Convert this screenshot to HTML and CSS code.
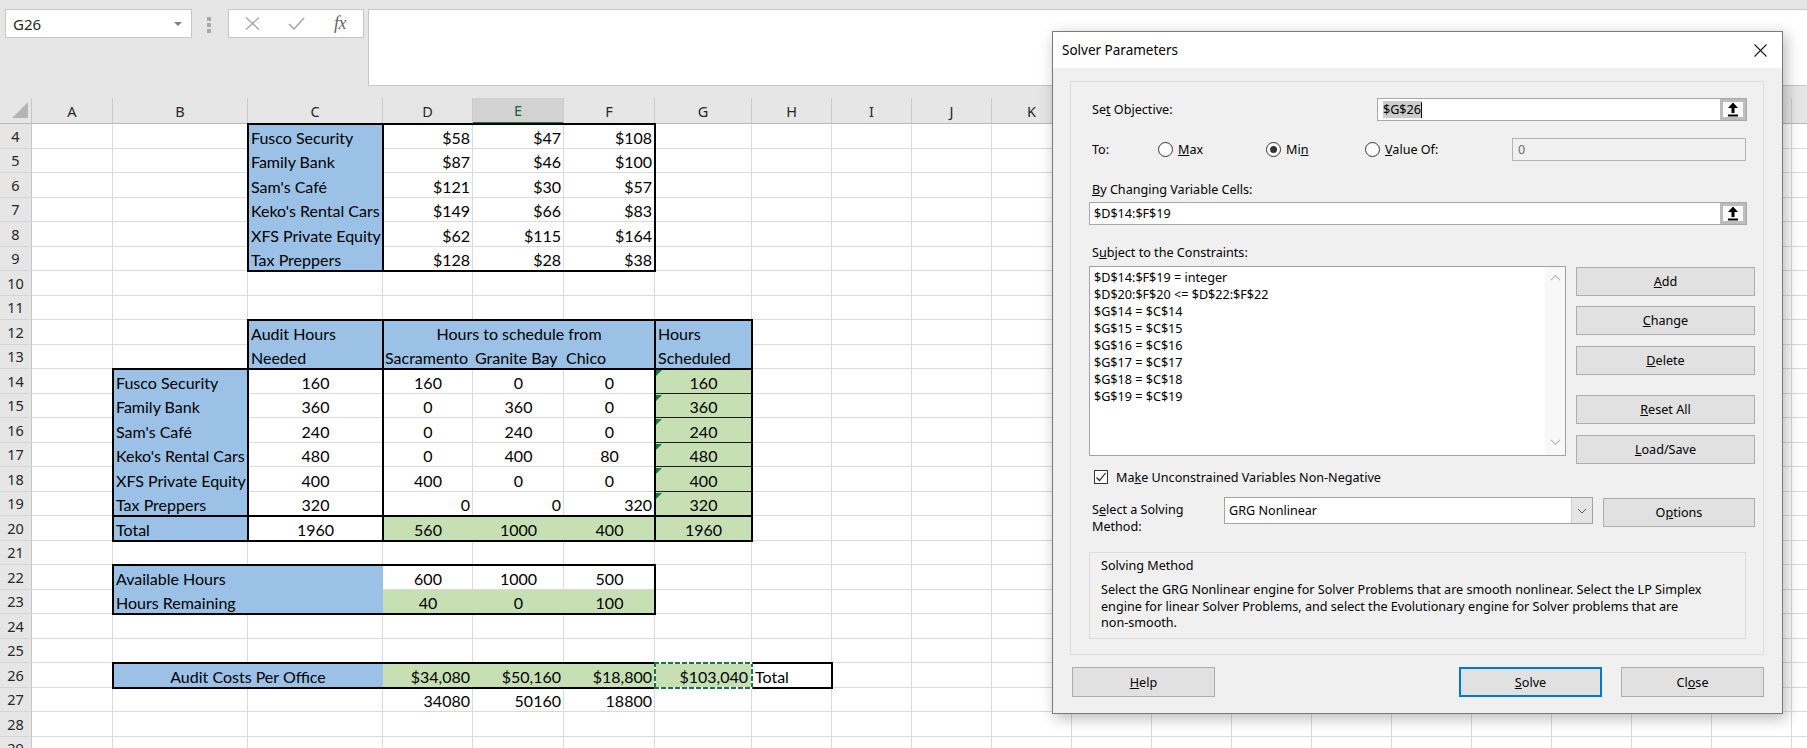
FILE: index.html
```html
<!DOCTYPE html>
<html lang="en">
<head>
<meta charset="utf-8">
<title>Solver Parameters</title>
<link rel="stylesheet" href="styles.css">
</head>
<body>
<div class="app">
  <div class="fbar">
    <div class="namebox"><span>G26</span><span class="nb-arrow"></span></div>
    <div class="dots"><i></i><i></i><i></i></div>
    <div class="fxbox">
      <span class="fxi"><svg width="15" height="13" viewBox="0 0 15 13"><path d="M1 0.5L14 12.5M14 0.5L1 12.5" stroke="#a8a8a8" stroke-width="1.4" fill="none"/></svg></span>
      <span class="fxi"><svg width="17" height="13" viewBox="0 0 17 13"><path d="M1 7L6 12L16 1" stroke="#a8a8a8" stroke-width="1.6" fill="none"/></svg></span>
      <span class="fxi fx">fx</span>
    </div>
    <div class="formula"></div>
  </div>

  <div class="sheet">
    <div class="corner"><span class="corner-tri"></span></div>
    <div class="ch">A</div><div class="ch">B</div><div class="ch">C</div><div class="ch">D</div><div class="ch sel">E</div><div class="ch">F</div><div class="ch">G</div><div class="ch">H</div><div class="ch">I</div><div class="ch">J</div><div class="ch">K</div><div class="ch">L</div><div class="ch">M</div><div class="ch">N</div><div class="ch">O</div><div class="ch">P</div><div class="ch">Q</div><div class="ch">R</div><div class="ch">S</div><div class="ch">T</div><div class="ch">U</div>

    <div class="cells"></div>

    <div class="rh r4">4</div><div class="rh r5">5</div><div class="rh r6">6</div><div class="rh r7">7</div><div class="rh r8">8</div><div class="rh r9">9</div><div class="rh r10">10</div><div class="rh r11">11</div><div class="rh r12">12</div><div class="rh r13">13</div><div class="rh r14">14</div><div class="rh r15">15</div><div class="rh r16">16</div><div class="rh r17">17</div><div class="rh r18">18</div><div class="rh r19">19</div><div class="rh r20">20</div><div class="rh r21">21</div><div class="rh r22">22</div><div class="rh r23">23</div><div class="rh r24">24</div><div class="rh r25">25</div><div class="rh r26">26</div><div class="rh r27">27</div><div class="rh r28">28</div><div class="rh r29">29</div>

    <!-- rate table -->
    <div class="cell l blue r4 cC">Fusco Security</div><div class="cell r r4 cD">$58</div><div class="cell r r4 cE">$47</div><div class="cell r r4 cF">$108</div>
    <div class="cell l blue r5 cC">Family Bank</div><div class="cell r r5 cD">$87</div><div class="cell r r5 cE">$46</div><div class="cell r r5 cF">$100</div>
    <div class="cell l blue r6 cC">Sam's Café</div><div class="cell r r6 cD">$121</div><div class="cell r r6 cE">$30</div><div class="cell r r6 cF">$57</div>
    <div class="cell l blue r7 cC">Keko's Rental Cars</div><div class="cell r r7 cD">$149</div><div class="cell r r7 cE">$66</div><div class="cell r r7 cF">$83</div>
    <div class="cell l blue r8 cC">XFS Private Equity</div><div class="cell r r8 cD">$62</div><div class="cell r r8 cE">$115</div><div class="cell r r8 cF">$164</div>
    <div class="cell l blue r9 cC">Tax Preppers</div><div class="cell r r9 cD">$128</div><div class="cell r r9 cE">$28</div><div class="cell r r9 cF">$38</div>

    <!-- schedule table header -->
    <div class="cell l blue r12 cC">Audit Hours</div><div class="cell m blue r12 cDF">Hours to schedule from</div><div class="cell l blue r12 cG">Hours</div>
    <div class="cell l blue r13 cC">Needed</div><div class="cell l blue r13 cD tight">Sacramento</div><div class="cell l blue r13 cE tight">Granite Bay</div><div class="cell l blue r13 cF tight">Chico</div><div class="cell l blue r13 cG">Scheduled</div>

    <!-- schedule table body -->
    <div class="cell l blue r14 cB">Fusco Security</div><div class="cell m r14 cC">160</div><div class="cell m r14 cD">160</div><div class="cell m r14 cE">0</div><div class="cell m r14 cF">0</div><div class="cell m green tri sep r14 cG">160</div>
    <div class="cell l blue r15 cB">Family Bank</div><div class="cell m r15 cC">360</div><div class="cell m r15 cD">0</div><div class="cell m r15 cE">360</div><div class="cell m r15 cF">0</div><div class="cell m green tri sep r15 cG">360</div>
    <div class="cell l blue r16 cB">Sam's Café</div><div class="cell m r16 cC">240</div><div class="cell m r16 cD">0</div><div class="cell m r16 cE">240</div><div class="cell m r16 cF">0</div><div class="cell m green tri sep r16 cG">240</div>
    <div class="cell l blue r17 cB">Keko's Rental Cars</div><div class="cell m r17 cC">480</div><div class="cell m r17 cD">0</div><div class="cell m r17 cE">400</div><div class="cell m r17 cF">80</div><div class="cell m green tri sep r17 cG">480</div>
    <div class="cell l blue r18 cB">XFS Private Equity</div><div class="cell m r18 cC">400</div><div class="cell m r18 cD">400</div><div class="cell m r18 cE">0</div><div class="cell m r18 cF">0</div><div class="cell m green tri sep r18 cG">400</div>
    <div class="cell l blue r19 cB">Tax Preppers</div><div class="cell m r19 cC">320</div><div class="cell r r19 cD">0</div><div class="cell r r19 cE">0</div><div class="cell r r19 cF">320</div><div class="cell m green tri r19 cG">320</div>
    <div class="cell l blue r20 cB">Total</div><div class="cell m r20 cC">1960</div><div class="cell m green r20 cD">560</div><div class="cell m green r20 cE">1000</div><div class="cell m green r20 cF">400</div><div class="cell m green r20 cG">1960</div>

    <!-- availability -->
    <div class="cell l blue r22 cBC">Available Hours</div><div class="cell m r22 cD">600</div><div class="cell m r22 cE">1000</div><div class="cell m r22 cF">500</div>
    <div class="cell l blue r23 cBC">Hours Remaining</div><div class="cell m green r23 cD">40</div><div class="cell m green r23 cE">0</div><div class="cell m green r23 cF">100</div>

    <!-- costs -->
    <div class="cell m blue r26 cBC">Audit Costs Per Office</div><div class="cell r green r26 cD">$34,080</div><div class="cell r green r26 cE">$50,160</div><div class="cell r green r26 cF">$18,800</div><div class="cell r ants r26 cG">$103,040</div><div class="cell l white r26 cH">Total</div>
    <div class="cell r r27 cD">34080</div><div class="cell r r27 cE">50160</div><div class="cell r r27 cF">18800</div>

    <!-- thick borders -->
    <div class="box r4-9 cC"></div>
    <div class="box r4-9 cDF"></div>
    <div class="box r12-13 cC"></div>
    <div class="box r12-13 cDF"></div>
    <div class="box r12-13 cG"></div>
    <div class="box r14-19 cB"></div>
    <div class="box r14-19 cC"></div>
    <div class="box r14-19 cDF"></div>
    <div class="box r14-19 cG"></div>
    <div class="box r20 cB"></div>
    <div class="box r20 cC"></div>
    <div class="box r20 cDF"></div>
    <div class="box r20 cG"></div>
    <div class="box r22-23 cBF"></div>
    <div class="box r26 cBH"></div>
  </div>
</div>

<div class="dialog">
  <div class="dlg-title">
    <span>Solver Parameters</span>
    <svg width="13" height="13" viewBox="0 0 13 13"><path d="M0.5 0.5L12.5 12.5M12.5 0.5L0.5 12.5" stroke="#1a1a1a" stroke-width="1.1" fill="none"/></svg>
  </div>
  <div class="panel">
    <div class="row-obj">
      <span class="lab">Se<u>t</u> Objective:</span>
      <div class="refbox obj"><span class="seltext">$G$26</span><span class="caret"></span>
        <span class="refbtn"><svg width="12" height="15" viewBox="0 0 12 15"><path d="M6 0.5L11 6H7.5V11H4.5V6H1Z" fill="#000"/><rect x="1" y="12.5" width="10" height="2" fill="#000"/></svg></span>
      </div>
    </div>
    <div class="row-to">
      <span class="lab">To:</span>
      <span class="radio"><i class="rb"></i><span><u>M</u>ax</span></span>
      <span class="radio"><i class="rb on"></i><span>Mi<u>n</u></span></span>
      <span class="radio"><i class="rb"></i><span><u>V</u>alue Of:</span></span>
      <span class="valbox">0</span>
    </div>
    <div class="lbl lbl-chg"><u>B</u>y Changing Variable Cells:</div>
    <div class="refbox chg"><span>$D$14:$F$19</span>
      <span class="refbtn"><svg width="12" height="15" viewBox="0 0 12 15"><path d="M6 0.5L11 6H7.5V11H4.5V6H1Z" fill="#000"/><rect x="1" y="12.5" width="10" height="2" fill="#000"/></svg></span>
    </div>
    <div class="lbl lbl-sub">S<u>u</u>bject to the Constraints:</div>
    <div class="cons">
      <div class="listbox">
        <div class="items">
          <div>$D$14:$F$19 = integer</div>
          <div>$D$20:$F$20 &lt;= $D$22:$F$22</div>
          <div>$G$14 = $C$14</div>
          <div>$G$15 = $C$15</div>
          <div>$G$16 = $C$16</div>
          <div>$G$17 = $C$17</div>
          <div>$G$18 = $C$18</div>
          <div>$G$19 = $C$19</div>
        </div>
        <div class="vscroll">
          <svg width="11" height="7" viewBox="0 0 11 7"><path d="M1 6L5.5 1.5L10 6" stroke="#bdbdbd" stroke-width="1.1" fill="none"/></svg>
          <svg width="11" height="7" viewBox="0 0 11 7"><path d="M1 1L5.5 5.5L10 1" stroke="#bdbdbd" stroke-width="1.1" fill="none"/></svg>
        </div>
      </div>
      <div class="cons-btns">
        <button class="btn b-add"><u>A</u>dd</button>
        <button class="btn b-change"><u>C</u>hange</button>
        <button class="btn b-delete"><u>D</u>elete</button>
        <button class="btn b-reset"><u>R</u>eset All</button>
        <button class="btn b-load"><u>L</u>oad/Save</button>
      </div>
    </div>
    <div class="chk-row">
      <span class="chk"><svg width="12" height="12" viewBox="0 0 12 12"><path d="M1.5 6.5L4.5 9.5L10.5 2" stroke="#222" stroke-width="1.2" fill="none"/></svg></span>
      <span>Ma<u>k</u>e Unconstrained Variables Non-Negative</span>
    </div>
    <div class="method-row">
      <div class="method-lbl">S<u>e</u>lect a Solving<br>Method:</div>
      <div class="combo"><span>GRG Nonlinear</span><span class="combo-btn"><svg width="10" height="6" viewBox="0 0 10 6"><path d="M1 1L5 5L9 1" stroke="#606060" stroke-width="1" fill="none"/></svg></span></div>
      <button class="btn b-opt">O<u>p</u>tions</button>
    </div>
    <div class="method-box">
      <div class="mb-title">Solving Method</div>
      <div class="mb-text">Select the GRG Nonlinear engine for Solver Problems that are smooth nonlinear. Select the LP Simplex<br>engine for linear Solver Problems, and select the Evolutionary engine for Solver problems that are<br>non-smooth.</div>
    </div>
  </div>
  <div class="dlg-foot">
    <button class="btn fbtn"><u>H</u>elp</button>
    <button class="btn fbtn solve"><u>S</u>olve</button>
    <button class="btn fbtn close">Cl<u>o</u>se</button>
  </div>
</div>
</body>
</html>
```

FILE: styles.css
```css
* { box-sizing: border-box; margin: 0; padding: 0; }
html, body { width: 1807px; height: 748px; overflow: hidden; }
body { background: #e6e6e6; font-family: "Noto Sans", sans-serif; position: relative; color: #000; }

.app { display: flex; flex-direction: column; height: 748px; }

/* formula bar */
.fbar { height: 98px; flex: none; display: flex; align-items: flex-start; padding: 9px 0 0 5px; }
.namebox { width: 187px; height: 29px; background: #fff; border: 1px solid #c6c6c6; display: flex; align-items: center; justify-content: space-between; padding: 0 9px 0 7px; font-size: 15px; color: #262626; }
.nb-arrow { width: 0; height: 0; border-left: 4px solid transparent; border-right: 4px solid transparent; border-top: 4px solid #7f7f7f; }
.dots { margin: 8px 0 0 15px; width: 4px; display: flex; flex-direction: column; gap: 2px; }
.dots i { display: block; width: 4px; height: 4px; background: #a9a9a9; }
.fxbox { margin-left: 17px; width: 136px; height: 29px; background: #fff; border: 1px solid #c6c6c6; display: grid; grid-template-columns: repeat(3, 44px); padding-left: 1px; align-items: center; }
.fxi { display: flex; justify-content: center; align-items: center; }
.fx { font-family: "Liberation Serif", serif; font-style: italic; font-size: 18px; color: #666; letter-spacing: -0.5px; }
.formula { margin-left: 4px; flex: 1; height: 77px; background: #fff; border: 1px solid #c6c6c6; border-right: 0; }

/* sheet grid */
.sheet {
  flex: 1; min-height: 0; overflow: hidden; background: #fff;
  display: grid;
  grid-template-columns: [rh] 32px [A] 81px [B] 135px [C] 135px [D] 90px [E] 91px [F] 91px [G] 97px [H] 80px [I] repeat(12, 80px) [U] 80px;
  grid-template-rows: 26px repeat(13, 25px 24px);
  --gl: #dadada;
}
.corner { background: #e6e6e6; border-right: 1px solid #c6c6c6; border-bottom: 1px solid #b9b9b9; display: flex; align-items: flex-end; justify-content: flex-end; padding: 0 3px 5px 0; }
.corner-tri { width: 0; height: 0; border-left: 16px solid transparent; border-bottom: 16px solid #b5b5b5; }
.ch { background: #e6e6e6; border-right: 1px solid #cbcbcb; border-bottom: 1px solid #b9b9b9; display: flex; align-items: center; justify-content: center; font-size: 14.5px; line-height: 1; color: #262626; padding-top: 1px; }
.ch.sel { background: #d2d2d2; border-bottom: 2px solid #217346; color: #1b5e37; }

.cells {
  grid-row: 2 / -1; grid-column: A / -1;
  background-image:
    linear-gradient(to right, transparent 80px, var(--gl) 80px 81px, transparent 81px 215px, var(--gl) 215px 216px, transparent 216px 350px, var(--gl) 350px 351px, transparent 351px 440px, var(--gl) 440px 441px, transparent 441px 531px, var(--gl) 531px 532px, transparent 532px 622px, var(--gl) 622px 623px, transparent 623px 719px, var(--gl) 719px 720px, transparent 720px),
    repeating-linear-gradient(to right, transparent 0 79px, var(--gl) 79px 80px),
    repeating-linear-gradient(to bottom, transparent 0 24px, var(--gl) 24px 25px, transparent 25px 48px, var(--gl) 48px 49px);
  background-position: 0 0, 720px 0, 0 0;
  background-size: 100% 100%, 1200px 100%, 100% 100%;
  background-repeat: no-repeat, no-repeat, repeat;
}

.rh { grid-column: rh; background: #e6e6e6; border-right: 1px solid #c6c6c6; border-bottom: 1px solid #d5d5d5; display: flex; align-items: center; justify-content: center; font-size: 14.5px; line-height: 1; color: #262626; }

.r4 { grid-row: 2; } .r5 { grid-row: 3; } .r6 { grid-row: 4; } .r7 { grid-row: 5; } .r8 { grid-row: 6; } .r9 { grid-row: 7; }
.r10 { grid-row: 8; } .r11 { grid-row: 9; } .r12 { grid-row: 10; } .r13 { grid-row: 11; } .r14 { grid-row: 12; } .r15 { grid-row: 13; }
.r16 { grid-row: 14; } .r17 { grid-row: 15; } .r18 { grid-row: 16; } .r19 { grid-row: 17; } .r20 { grid-row: 18; } .r21 { grid-row: 19; }
.r22 { grid-row: 20; } .r23 { grid-row: 21; } .r24 { grid-row: 22; } .r25 { grid-row: 23; } .r26 { grid-row: 24; } .r27 { grid-row: 25; }
.r28 { grid-row: 26; } .r29 { grid-row: 27; }
.r4-9 { grid-row: 2 / 8; } .r12-13 { grid-row: 10 / 12; } .r14-19 { grid-row: 12 / 18; } .r20 { grid-row: 18; } .r22-23 { grid-row: 20 / 22; }

.cB { grid-column: B / span 1; } .cC { grid-column: C / span 1; } .cD { grid-column: D / span 1; } .cE { grid-column: E / span 1; }
.cF { grid-column: F / span 1; } .cG { grid-column: G / span 1; } .cH { grid-column: H / span 1; }
.cBC { grid-column: B / D; } .cDF { grid-column: D / G; } .cBF { grid-column: B / G; } .cBH { grid-column: B / I; }

.cell { display: flex; align-items: flex-end; padding: 0 3px 3px; font-family: Lato, "Liberation Sans", sans-serif; font-size: 16px; line-height: 1; white-space: nowrap; overflow: hidden; min-width: 0; color: #000; }
.cell.l { justify-content: flex-start; }
.cell.m { justify-content: center; }
.cell.r { justify-content: flex-end; }
.cell.tight { padding-left: 2px; padding-right: 0; }
.blue { background: #9bc2e6; }
.green { background: #c6e0b4; }
.white { background: #fff; }
.sep { box-shadow: inset 0 -1px 0 #1a1a1a; }
.tri { position: relative; }
.tri::before { content: ""; position: absolute; left: 1px; top: 1px; border-top: 6px solid #1f7a3f; border-right: 6px solid transparent; }

.ants {
  margin: -1px; position: relative; z-index: 3; padding: 0 5px 4px 3px;
  background:
    repeating-linear-gradient(90deg, #217346 0 5px, #fff 5px 7px) top / 100% 2px no-repeat,
    repeating-linear-gradient(90deg, #217346 0 5px, #fff 5px 7px) bottom / 100% 2px no-repeat,
    repeating-linear-gradient(180deg, #217346 0 5px, #fff 5px 7px) left / 2px 100% no-repeat,
    repeating-linear-gradient(180deg, #217346 0 5px, #fff 5px 7px) right / 2px 100% no-repeat,
    #c6e0b4;
}

.box { border: 2px solid #000; margin: -1px; position: relative; z-index: 2; }

/* dialog */
.dialog {
  position: absolute; left: 1052px; top: 31px; width: 731px; height: 683px;
  background: #f0f0f0; border: 1px solid #7a7a7a;
  box-shadow: 3px 4px 14px rgba(0, 0, 0, 0.28);
  display: flex; flex-direction: column;
  font-family: "Noto Sans", sans-serif; font-size: 12.6px; color: #000;
}
.dlg-title { height: 36px; flex: none; background: #fff; display: flex; align-items: center; justify-content: space-between; padding: 0 15px 0 9px; font-size: 13.5px; }
.panel { flex: none; margin: 13px 18px 0 17px; border: 1px solid #dcdcdc; padding: 16px 8px 15px 18px; display: flex; flex-direction: column; }
.panel > * { flex: none; }
.lab { padding-left: 3px; }
.row-obj { display: flex; align-items: center; height: 23px; }
.refbox { display: flex; align-items: center; background: #fff; border: 1px solid #a9a9a9; height: 23px; padding-left: 4px; }
.refbox.obj { margin-left: auto; margin-right: 8px; width: 370px; padding-left: 5px; }
.seltext { background: #cccccc; line-height: 17px; }
.caret { width: 1px; height: 16px; background: #000; }
.refbtn { margin-left: auto; width: 26px; height: 21px; border: 3px solid #bdbdbd; background: #fbfbfb; display: flex; align-items: center; justify-content: center; }
.row-to { margin-top: 17px; display: grid; grid-template-columns: 69px 108px 99px 147px 234px; align-items: center; height: 23px; }
.radio { display: flex; align-items: center; gap: 5px; }
.rb { width: 15px; height: 15px; border: 1px solid #333; border-radius: 50%; background: #fff; display: flex; align-items: center; justify-content: center; }
.rb.on::after { content: ""; width: 7px; height: 7px; border-radius: 50%; background: #333; }
.valbox { height: 23px; border: 1px solid #b4b4b4; background: #f0f0f0; color: #6d6d6d; padding-left: 5px; display: flex; align-items: center; }
.lbl { line-height: 16px; padding-left: 3px; }
.lbl-chg { margin-top: 21px; }
.refbox.chg { margin-top: 4px; width: 658px; }
.lbl-sub { margin-top: 20px; }
.cons { margin-top: 5px; display: flex; align-items: flex-start; height: 190px; }
.listbox { flex: none; width: 477px; height: 190px; background: #fff; border: 1px solid #a3a3a3; display: flex; }
.items { flex: 1; padding: 2px 4px; line-height: 17px; }
.vscroll { width: 20px; background: #f8f8f8; display: flex; flex-direction: column; justify-content: space-between; align-items: center; padding: 7px 0 9px; }
.cons-btns { flex: none; margin-left: 10px; width: 179px; display: flex; flex-direction: column; }
.cons-btns .btn { flex: none; }
.btn { font: inherit; color: #000; background: #e1e1e1; border: 1px solid #adadad; display: flex; align-items: center; justify-content: center; height: 29px; }
.b-add { margin-top: 1px; }
.b-change { margin-top: 10px; }
.b-delete { margin-top: 11px; }
.b-reset { margin-top: 20px; }
.b-load { margin-top: 11px; }
.chk-row { margin-top: 13px; height: 16px; display: flex; align-items: center; gap: 8px; padding-left: 5px; }
.chk { width: 14px; height: 14px; border: 1px solid #333; background: #fff; display: flex; align-items: center; justify-content: center; }
.method-row { margin-top: 12px; display: grid; grid-template-columns: 135px 369px 162px; height: 38px; align-items: start; }
.method-lbl { padding: 4px 0 0 3px; line-height: 17px; }
.combo { display: flex; align-items: center; height: 27px; background: #fff; border: 1px solid #a3a3a3; padding-left: 4px; }
.combo-btn { margin-left: auto; width: 21px; height: 25px; background: #e5e5e5; border-left: 1px solid #cfcfcf; display: flex; align-items: center; justify-content: center; }
.b-opt { justify-self: end; width: 152px; margin-top: 1px; }
.method-box { margin-top: 17px; width: 657px; height: 87px; border: 1px solid #dcdcdc; padding: 5px 10px 0 11px; }
.mb-title { line-height: 16px; }
.mb-text { margin-top: 8px; line-height: 16.5px; white-space: nowrap; }
.dlg-foot { display: flex; padding: 12px 18px 0 19px; }
.fbtn { flex: none; width: 143px; height: 30px; }
.solve { margin-left: auto; border: 2px solid #0078d7; }
.close { margin-left: 19px; }
```
